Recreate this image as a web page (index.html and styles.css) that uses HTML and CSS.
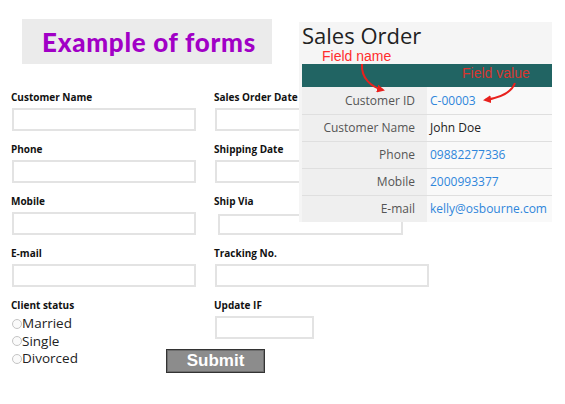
FILE: index.html
```html
<!DOCTYPE html>
<html lang="en">
<head>
    <meta charset="UTF-8">
    <meta name="viewport" content="width=device-width, initial-scale=1.0">
    <title>Example of forms</title>
    <link rel="stylesheet" href="styles.css">
</head>
<body>
    <div class="page">
        <div class="banner">
            <h1>Example of forms</h1>
        </div>

        <form class="form">
            <div class="col">
                <div class="field">
                    <label for="custName">Customer Name</label>
                    <input type="text" id="custName" class="box">
                </div>
                <div class="field">
                    <label for="phone">Phone</label>
                    <input type="text" id="phone" class="box">
                </div>
                <div class="field">
                    <label for="mobile">Mobile</label>
                    <input type="text" id="mobile" class="box">
                </div>
                <div class="field">
                    <label for="email">E-mail</label>
                    <input type="text" id="email" class="box">
                </div>
                <div class="field">
                    <label>Client status</label>
                    <div class="radios">
                        <div class="radio"><span class="dot"></span>Married</div>
                        <div class="radio"><span class="dot"></span>Single</div>
                        <div class="radio"><span class="dot"></span>Divorced</div>
                    </div>
                </div>
            </div>

            <div class="col">
                <div class="field">
                    <label for="orderDate">Sales Order Date</label>
                    <input type="text" id="orderDate" class="box">
                </div>
                <div class="field">
                    <label for="shipDate">Shipping Date</label>
                    <input type="text" id="shipDate" class="box">
                </div>
                <div class="field">
                    <label for="shipVia">Ship Via</label>
                    <input type="text" id="shipVia" class="box box-via">
                </div>
                <div class="field">
                    <label for="tracking">Tracking No.</label>
                    <input type="text" id="tracking" class="box box-wide">
                </div>
                <div class="field field-last">
                    <label for="updateIf">Update IF</label>
                    <input type="text" id="updateIf" class="box box-small">
                </div>
                <button type="button" class="submit">Submit</button>
            </div>
        </form>

        <section class="order">
            <h2>Sales Order</h2>
            <div class="order-bar"></div>
            <div class="order-row">
                <div class="key">Customer ID</div>
                <div class="val link">C-00003</div>
            </div>
            <div class="order-row">
                <div class="key">Customer Name</div>
                <div class="val">John Doe</div>
            </div>
            <div class="order-row">
                <div class="key">Phone</div>
                <div class="val link">09882277336</div>
            </div>
            <div class="order-row">
                <div class="key">Mobile</div>
                <div class="val link">2000993377</div>
            </div>
            <div class="order-row">
                <div class="key">E-mail</div>
                <div class="val link">kelly@osbourne.com</div>
            </div>

            <span class="note note-name">Field name</span>
            <span class="note note-value">Field value</span>

            <!-- annotation arrows -->
            <svg class="arrows" width="253" height="200" viewBox="0 0 253 200">
                <defs>
                    <marker id="head" markerWidth="8" markerHeight="8" refX="6" refY="4" orient="auto" markerUnits="userSpaceOnUse">
                        <path d="M0 0 L8 4 L0 8 Z" fill="#e8211d"/>
                    </marker>
                </defs>
                <path d="M63 42 C62 56, 72 65, 84 68" fill="none" stroke="#e8211d" stroke-width="2" marker-end="url(#head)"/>
                <path d="M216 61 C212 72, 200 76, 186 78" fill="none" stroke="#e8211d" stroke-width="2" marker-end="url(#head)"/>
            </svg>
        </section>
    </div>
</body>
</html>
```

FILE: styles.css
```css
body {
    margin: 0;
    background: #fff;
    font-family: "Open Sans", "Noto Sans", sans-serif;
    color: #222;
}
.page {
    position: relative;
    width: 565px;
    height: 404px;
    overflow: hidden;
}
.banner {
    margin: 19px 0 0 22px;
    width: 250px;
    height: 45px;
    background: #ebebeb;
    display: flex;
    align-items: center;
    justify-content: center;
}
.banner h1 {
    margin: 0;
    font-family: Lato, sans-serif;
    font-weight: 900;
    font-size: 26px;
    letter-spacing: 0.7px;
    color: #a100c6;
    padding-left: 4px;
}
.form {
    display: grid;
    grid-template-columns: 203px 1fr;
    padding: 26px 0 0 11px;
}
.field {
    display: flex;
    flex-direction: column;
    align-items: flex-start;
    height: 52px;
}
.field label {
    font-size: 10px;
    font-weight: 700;
    line-height: 14px;
    color: #111;
    margin-bottom: 4px;
}
.box {
    box-sizing: border-box;
    width: 184px;
    height: 23px;
    margin: 0 0 0 1px;
    padding: 0 4px;
    border: 2px solid #e3e3e3;
    border-radius: 0;
    background: #fff;
}
.box-via {
    width: 185px;
    height: 21px;
    margin: 2px 0 0 4px;
}
.box-wide {
    width: 214px;
}
.box-small {
    width: 99px;
}
.field-last {
    height: 51px;
}
.radios {
    margin-top: -1px;
}
.radio {
    display: flex;
    align-items: center;
    font-size: 13.5px;
    line-height: 17.5px;
    color: #222;
}
.dot {
    box-sizing: border-box;
    width: 10px;
    height: 10px;
    margin: 0 0 0 1px;
    border: 1px solid #c4c4c4;
    border-radius: 50%;
    background: #fafafa;
}
.submit {
    box-sizing: border-box;
    width: 99px;
    height: 24px;
    margin: 0 0 0 -48px;
    padding: 0;
    background: #8c8c8c;
    border: 1px solid #333;
    box-shadow: inset 0 0 0 1px #6e6e6e;
    color: #fff;
    font-family: "Liberation Sans", Arial, sans-serif;
    font-weight: 700;
    font-size: 17px;
    line-height: 20px;
}
.order {
    position: absolute;
    left: 299px;
    top: 22px;
    width: 253px;
    height: 200px;
    background: #f5f5f5;
}
.order h2 {
    margin: 0;
    height: 26px;
    padding: 0 0 16px 3px;
    font-weight: 400;
    font-size: 22px;
    line-height: 26px;
    color: #222;
}
.order-bar {
    margin-left: 3px;
    height: 23px;
    background: #216463;
}
.order-row {
    margin-left: 3px;
    display: grid;
    grid-template-columns: 125px 1fr;
    height: 27px;
    font-size: 12px;
    line-height: 27px;
}
.order-row + .order-row {
    border-top: 1px solid #dfdfdf;
    height: 26px;
    line-height: 26px;
}
.order-row .key {
    background: #efefef;
    color: #555;
    text-align: right;
    padding-right: 12px;
}
.order-row .val {
    background: #f9f9f9;
    padding-left: 3px;
    color: #222;
    white-space: nowrap;
}
.order-row .link {
    color: #2f86db;
}
.note {
    position: absolute;
    font-family: "Liberation Sans", Arial, sans-serif;
    font-size: 14px;
    line-height: 16px;
}
.note-name {
    left: 23px;
    top: 26px;
    color: #ff2d2d;
}
.note-value {
    left: 163px;
    top: 43px;
    color: #d8362f;
}
.arrows {
    position: absolute;
    left: 0;
    top: 0;
    pointer-events: none;
}
```
